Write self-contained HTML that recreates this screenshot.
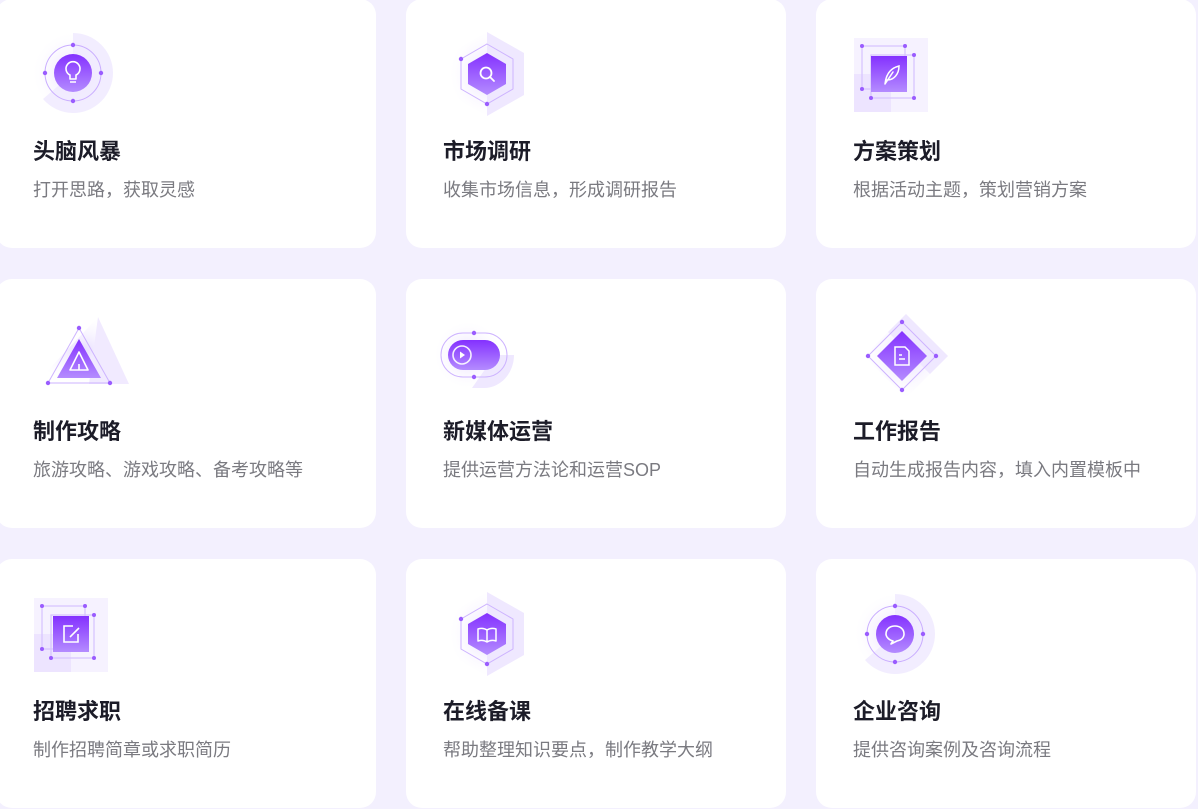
<!DOCTYPE html>
<html><head><meta charset="utf-8">
<style>
html,body{margin:0;padding:0;}
body{width:1198px;height:809px;background:#f3f0fe;position:relative;overflow:hidden;font-family:"Liberation Sans","Noto Sans CJK SC",sans-serif;}
.card{position:absolute;width:380px;height:249px;background:#fff;border-radius:16px;}
.t{position:absolute;left:37px;top:139px;font-size:22px;font-weight:bold;color:#1c1c28;line-height:28px;white-space:nowrap;}
.s{position:absolute;left:37px;top:179px;font-size:18px;color:#7a7a80;line-height:24px;white-space:nowrap;}
svg{position:absolute;width:100px;height:100px;overflow:visible;}
</style></head><body>
<svg width="0" height="0" style="position:absolute">
<defs>
<linearGradient id="g" x1="0" y1="0" x2="0" y2="1"><stop offset="0" stop-color="#8431ff"/><stop offset="1" stop-color="#b48cff"/></linearGradient>
<radialGradient id="glow"><stop offset="0" stop-color="#e6dbff"/><stop offset="1" stop-color="#faf7ff" stop-opacity="0"/></radialGradient>
</defs></svg>

<div class="card" style="left:-4px;top:-1px"><div class="t">头脑风暴</div><div class="s">打开思路，获取灵感</div></div>
<div class="card" style="left:406px;top:-1px"><div class="t">市场调研</div><div class="s">收集市场信息，形成调研报告</div></div>
<div class="card" style="left:816px;top:-1px"><div class="t">方案策划</div><div class="s">根据活动主题，策划营销方案</div></div>
<div class="card" style="left:-4px;top:279px"><div class="t">制作攻略</div><div class="s">旅游攻略、游戏攻略、备考攻略等</div></div>
<div class="card" style="left:406px;top:279px"><div class="t">新媒体运营</div><div class="s">提供运营方法论和运营SOP</div></div>
<div class="card" style="left:816px;top:279px"><div class="t">工作报告</div><div class="s">自动生成报告内容，填入内置模板中</div></div>
<div class="card" style="left:-4px;top:559px"><div class="t">招聘求职</div><div class="s">制作招聘简章或求职简历</div></div>
<div class="card" style="left:406px;top:559px"><div class="t">在线备课</div><div class="s">帮助整理知识要点，制作教学大纲</div></div>
<div class="card" style="left:816px;top:559px"><div class="t">企业咨询</div><div class="s">提供咨询案例及咨询流程</div></div>

<svg style="left:23px;top:23px" viewBox="-50 -50 100 100">
<circle r="40" fill="url(#glow)"/>
<path d="M0,-40 A40,40 0 0 1 0,40 A40 40 0 0 1 -30,26 L0,0Z" fill="#efe8ff" opacity=".8"/>
<circle r="28" fill="none" stroke="#c9adff" stroke-width="1"/>
<circle r="19" fill="url(#g)"/>
<g fill="#9a5cff"><circle cx="0" cy="-28" r="2.2"/><circle cx="28" cy="0" r="2.2"/><circle cx="0" cy="28" r="2.2"/><circle cx="-28" cy="0" r="2.2"/></g>
<path d="M-3,6 L-3,2 A7,7 0 1 1 3,2 L3,6Z M-3,9 H3" fill="none" stroke="#fff" stroke-width="1.6" stroke-linejoin="round"/>
</svg>
<svg style="left:437px;top:24px" viewBox="-50 -50 100 100">
<polygon points="0,-42 37,-21 37,21 0,42 -37,21 -37,-21" fill="url(#glow)"/>
<polygon points="0,-42 37,-21 37,21 0,42" fill="#efe8ff"/>
<polygon points="0,-30 26,-15 26,15 0,30 -26,15 -26,-15" fill="none" stroke="#cdb3ff" stroke-width="1"/>
<polygon points="0,-21 19,-10 19,10 0,21 -19,10 -19,-10" fill="url(#g)"/>
<g fill="#9a5cff"><circle cx="-26" cy="-15" r="2.2"/><circle cx="0" cy="30" r="2.2"/></g>
<circle cx="-1" cy="-1" r="5.5" fill="none" stroke="#fff" stroke-width="1.8"/><path d="M3,3 L7,7" stroke="#fff" stroke-width="1.8" stroke-linecap="round"/>
</svg>
<svg style="left:841px;top:24px" viewBox="-50 -50 100 100">
<rect x="-37" y="-36" width="74" height="74" fill="#f6f2ff"/>
<rect x="-37" y="0" width="37" height="38" fill="#ede4ff"/>
<rect x="-29" y="-28" width="43" height="43" fill="none" stroke="#d6c2ff" stroke-width="1.2"/>
<rect x="-20" y="-19" width="43" height="43" fill="none" stroke="#d6c2ff" stroke-width="1.2"/>
<rect x="-20" y="-18" width="36" height="36" fill="url(#g)"/>
<g fill="#9a5cff"><circle cx="-29" cy="-28" r="2"/><circle cx="14" cy="-28" r="2"/><circle cx="23" cy="-19" r="2"/><circle cx="-29" cy="15" r="2"/><circle cx="-20" cy="24" r="2"/><circle cx="23" cy="24" r="2"/></g>
<path d="M-6,10 C-5,0 0,-6 8,-8 C8,0 3,6 -4,6 M-6,10 L2,-2" fill="none" stroke="#fff" stroke-width="1.5" stroke-linecap="round"/>
</svg>
<svg style="left:29px;top:305px" viewBox="-50 -50 100 100">
<polygon points="19,-38 50,29 -44,29" fill="url(#glow)"/>
<polygon points="19,-38 50,29 10,29" fill="#f1eaff"/>
<polygon points="0,-27 31,28 -31,28" fill="none" stroke="#cdb3ff" stroke-width="1"/>
<polygon points="0,-16 22,23 -22,23" fill="url(#g)"/>
<g fill="#9a5cff"><circle cx="0" cy="-27" r="2.2"/><circle cx="31" cy="28" r="2.2"/><circle cx="-31" cy="28" r="2.2"/></g>
<path d="M0,-3 L9,15 L-9,15Z M0,9 V15" fill="none" stroke="#fff" stroke-width="1.6" stroke-linejoin="round"/>
</svg>
<svg style="left:424px;top:305px" viewBox="-50 -50 100 100">
<circle cx="-6" cy="0" r="33" fill="url(#glow)"/>
<path d="M21,-0 H40 A30,33 0 0 1 10,33 H-2 Z" fill="#efe8ff"/>
<rect x="-33" y="-22" width="66" height="44" rx="22" fill="none" stroke="#cdb3ff" stroke-width="1"/>
<rect x="-26" y="-15" width="52" height="30" rx="15" fill="url(#g)"/>
<g fill="#9a5cff"><circle cx="0" cy="-22" r="2.2"/><circle cx="0" cy="22" r="2.2"/></g>
<circle cx="-12" cy="0" r="9" fill="none" stroke="#fff" stroke-width="1.6" opacity=".9"/>
<path d="M-14,-3.5 L-9,0 L-14,3.5Z" fill="#fff"/>
</svg>
<svg style="left:852px;top:306px" viewBox="-50 -50 100 100">
<polygon points="4,-42 46,0 4,42 -38,0" fill="url(#glow)"/>
<polygon points="4,-42 46,0 28,18 -14,-24" fill="#efe8ff"/>
<polygon points="0,-34 34,0 0,34 -34,0" fill="none" stroke="#cdb3ff" stroke-width="1"/>
<polygon points="0,-25 25,0 0,25 -25,0" fill="url(#g)"/>
<g fill="#9a5cff"><circle cx="0" cy="-34" r="2.2"/><circle cx="34" cy="0" r="2.2"/><circle cx="0" cy="34" r="2.2"/><circle cx="-34" cy="0" r="2.2"/></g>
<path d="M-7,-9 H3 L7,-5 V9 H-7Z M-3,-1 H0 M-3,3 H3" fill="none" stroke="#fff" stroke-width="1.5"/>
</svg>
<svg style="left:21px;top:584px" viewBox="-50 -50 100 100">
<rect x="-37" y="-36" width="74" height="74" fill="#f6f2ff"/>
<rect x="-37" y="0" width="37" height="38" fill="#ede4ff"/>
<rect x="-29" y="-28" width="43" height="43" fill="none" stroke="#d6c2ff" stroke-width="1.2"/>
<rect x="-20" y="-19" width="43" height="43" fill="none" stroke="#d6c2ff" stroke-width="1.2"/>
<rect x="-18" y="-18" width="36" height="36" fill="url(#g)"/>
<g fill="#9a5cff"><circle cx="-29" cy="-28" r="2"/><circle cx="14" cy="-28" r="2"/><circle cx="23" cy="-19" r="2"/><circle cx="-29" cy="15" r="2"/><circle cx="-20" cy="24" r="2"/><circle cx="23" cy="24" r="2"/></g>
<path d="M2,-8 H-7 V8 H7 V0 M-1,3 L8,-6" fill="none" stroke="#fff" stroke-width="1.6"/>
</svg>
<svg style="left:437px;top:584px" viewBox="-50 -50 100 100">
<polygon points="0,-42 37,-21 37,21 0,42 -37,21 -37,-21" fill="url(#glow)"/>
<polygon points="0,-42 37,-21 37,21 0,42" fill="#efe8ff"/>
<polygon points="0,-30 26,-15 26,15 0,30 -26,15 -26,-15" fill="none" stroke="#cdb3ff" stroke-width="1"/>
<polygon points="0,-21 19,-10 19,10 0,21 -19,10 -19,-10" fill="url(#g)"/>
<g fill="#9a5cff"><circle cx="-26" cy="-15" r="2.2"/><circle cx="0" cy="30" r="2.2"/></g>
<path d="M0,-4 C-3,-6 -6,-6 -9,-5 V7 C-6,6 -3,6 0,8 C3,6 6,6 9,7 V-5 C6,-6 3,-6 0,-4Z M0,-4 V8" fill="none" stroke="#fff" stroke-width="1.5" stroke-linejoin="round"/>
</svg>
<svg style="left:845px;top:584px" viewBox="-50 -50 100 100">
<circle r="40" fill="url(#glow)"/>
<path d="M0,-40 A40,40 0 0 1 0,40 A40 40 0 0 1 -30,26 L0,0Z" fill="#efe8ff" opacity=".8"/>
<circle r="28" fill="none" stroke="#c9adff" stroke-width="1"/>
<circle r="19" fill="url(#g)"/>
<g fill="#9a5cff"><circle cx="0" cy="-28" r="2.2"/><circle cx="28" cy="0" r="2.2"/><circle cx="0" cy="28" r="2.2"/><circle cx="-28" cy="0" r="2.2"/></g>
<path d="M-2,7 L-4,10 L2,7 C7,6 9,3 9,0 C9,-5 5,-8 0,-8 C-5,-8 -9,-5 -9,0 C-9,3 -6,6 -2,7Z" fill="none" stroke="#fff" stroke-width="1.6" stroke-linejoin="round"/>
</svg>
</body></html>
